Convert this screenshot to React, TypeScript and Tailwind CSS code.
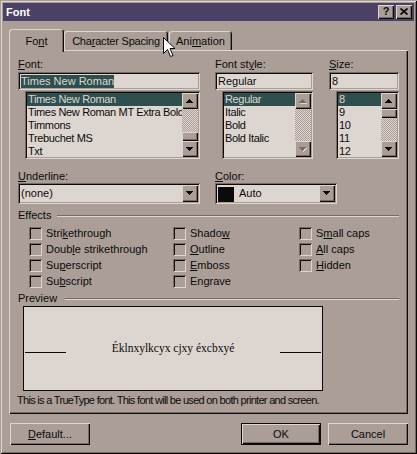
import type { ReactNode } from 'react';

// classic 3D borders, painted with inset shadows
const raised = 'bg-[#aa9e97] shadow-[inset_1px_1px_#ddd6d0,inset_-1px_-1px_#0b0b0b,inset_-2px_-2px_#796a63]';
const sunken = 'shadow-[inset_1px_1px_#796a63,inset_-1px_-1px_#ddd6d0,inset_2px_2px_#0b0b0b,inset_-2px_-2px_#aa9e97]';
const track = 'bg-[image:repeating-conic-gradient(#ddd6d0_0%_25%,#aa9e97_0%_50%)] bg-size-[2px_2px]';

function Arrow({ dir, disabled }: { dir: 'up' | 'down'; disabled?: boolean }) {
  const rows = [0, 1, 2, 3];
  const rect = (i: number, dx: number, color: string) => {
    const w = dir === 'up' ? 1 + 2 * i : 7 - 2 * i;
    return <rect key={`${i}-${dx}`} x={(7 - w) / 2 + dx} y={i + dx} width={w} height={1} fill={color} />;
  };
  return (
    <svg width="8" height="5" viewBox="0 0 8 5" shapeRendering="crispEdges">
      {disabled && rows.map((i) => rect(i, 1, '#ddd6d0'))}
      {rows.map((i) => rect(i, 0, disabled ? '#796a63' : '#0b0b0b'))}
    </svg>
  );
}

function ScrollBar({ thumb, disabled }: { thumb?: 'top' | 'bottom'; disabled?: boolean }) {
  return (
    <div className="flex w-[16px] shrink-0 flex-col">
      <div className={`${raised} flex h-[16px] items-center justify-center`}>
        <Arrow dir="up" disabled={disabled} />
      </div>
      <div className={`${track} flex flex-1 flex-col ${thumb === 'bottom' ? 'justify-end' : 'justify-start'}`}>
        {thumb && <div className={`${raised} h-[9px]`} />}
      </div>
      <div className={`${raised} flex h-[16px] items-center justify-center`}>
        <Arrow dir="down" disabled={disabled} />
      </div>
    </div>
  );
}

function ListBox({ items, width, thumb, disabled }: { items: string[]; width: string; thumb?: 'top' | 'bottom'; disabled?: boolean }) {
  return (
    <div className={`${sunken} ${width} mt-[1px] ml-[7px] flex h-[68px] bg-[#ddd6d0] p-[2px]`}>
      <div className="min-w-0 flex-1 overflow-hidden">
        {items.map((item, i) => (
          <div
            key={item}
            className={`h-[13px] whitespace-nowrap pl-[1px] leading-[13px] tracking-[-0.35px] ${i === 0 ? 'bg-[#2f4f4f] text-[#ddd6d0]' : ''}`}
          >
            {item}
          </div>
        ))}
      </div>
      <ScrollBar thumb={thumb} disabled={disabled} />
    </div>
  );
}

function TextBox({ value, selected }: { value: string; selected?: boolean }) {
  return (
    <div className={`${sunken} flex h-[18px] items-center bg-[#ddd6d0] pl-[3px]`}>
      <span className={`leading-[13px] ${selected ? 'bg-[#2f4f4f] text-[#ddd6d0]' : ''}`}>{value}</span>
    </div>
  );
}

function DropDown({ children }: { children: ReactNode }) {
  return (
    <div className={`${sunken} flex h-[21px] items-stretch bg-[#ddd6d0] p-[2px]`}>
      <div className="flex flex-1 items-center">{children}</div>
      <div className={`${raised} flex w-[16px] items-center justify-center`}>
        <Arrow dir="down" />
      </div>
    </div>
  );
}

function Check({ children }: { children: ReactNode }) {
  return (
    <div className="flex h-[16px] items-center gap-[4px]">
      <div className={`${sunken} h-[13px] w-[13px]`} />
      <span>{children}</span>
    </div>
  );
}

function GroupTitle({ children, gap }: { children: ReactNode; gap: string }) {
  return (
    <div className="flex h-[13px] items-center">
      <span>{children}</span>
      <div className={`${gap} h-[2px] flex-1 border-t border-b border-t-[#796a63] border-b-[#ddd6d0]`} />
    </div>
  );
}

export default function App() {
  return (
    <div className="relative h-[454px] w-[417px] overflow-hidden bg-[#aa9e97] p-[3px] font-['Liberation_Sans',Arial,sans-serif] text-[11px] leading-[13px] text-[#0b0b0b] shadow-[inset_1px_1px_#aa9e97,inset_-1px_-1px_#0b0b0b,inset_2px_2px_#ddd6d0,inset_-2px_-2px_#796a63]">
      {/* Title bar */}
      <div className="flex h-[18px] items-center bg-[#4b4166] pr-[2px] pl-[3px]">
        <span className="font-bold text-white">Font</span>
        <div className="ml-auto flex gap-[2px]">
          <div className={`${raised} flex h-[14px] w-[16px] items-center justify-center pb-[1px] text-[11px] font-bold`}>?</div>
          <div className={`${raised} flex h-[14px] w-[16px] items-center justify-center pb-[1px]`}>
            <svg width="8" height="7" viewBox="0 0 8 7">
              <path d="M0.5 0.5L7.5 6.5M7.5 0.5L0.5 6.5" stroke="#0b0b0b" strokeWidth="1.7" />
            </svg>
          </div>
        </div>
      </div>

      <div className="px-[6px]">
        {/* Tabs */}
        <div className="mt-[8px] flex h-[21px] items-end">
          <div className="relative z-10 -mb-[2px] h-[23px] w-[55px] rounded-t-[3px] bg-[#aa9e97] pt-[6px] text-center shadow-[inset_1px_1px_#ddd6d0,inset_-1px_0_#0b0b0b,inset_-2px_0_#796a63]">
            Fo<u>n</u>t
          </div>
          <div className="h-[19px] w-[104px] rounded-t-[3px] pt-[4px] text-center tracking-[-0.2px] shadow-[inset_1px_1px_#ddd6d0,inset_-1px_0_#0b0b0b,inset_-2px_0_#796a63]">
            Cha<u>r</u>acter Spacing
          </div>
          <div className="ml-[1px] h-[19px] w-[63px] rounded-t-[3px] pt-[4px] text-center shadow-[inset_1px_1px_#ddd6d0,inset_-1px_0_#0b0b0b,inset_-2px_0_#796a63]">
            Ani<u>m</u>ation
          </div>
        </div>

        {/* Tab page */}
        <div className="h-[364px] px-[9px] pt-[8px] shadow-[inset_1px_1px_#ddd6d0,inset_-1px_-1px_#0b0b0b,inset_-2px_-2px_#796a63]">
          <div className="flex">
            <div className="w-[182px]">
              <div className="h-[14px]"><u>F</u>ont:</div>
              <TextBox value="Times New Roman" selected />
              <ListBox
                width="w-[175px]"
                thumb="bottom"
                items={['Times New Roman', 'Times New Roman MT Extra Bold', 'Timmons', 'Trebuchet MS', 'Txt']}
              />
            </div>
            <div className="ml-[15px] w-[98px]">
              <div className="h-[14px]">Font st<u>y</u>le:</div>
              <TextBox value="Regular" />
              <ListBox width="w-[91px]" disabled items={['Regular', 'Italic', 'Bold', 'Bold Italic']} />
            </div>
            <div className="ml-[16px] w-[70px]">
              <div className="h-[14px]"><u>S</u>ize:</div>
              <TextBox value="8" />
              <ListBox width="w-[63px]" thumb="top" items={['8', '9', '10', '11', '12']} />
            </div>
          </div>

          <div className="mt-[11px] flex">
            <div className="w-[182px]">
              <div className="h-[13px]"><u>U</u>nderline:</div>
              <DropDown>
                <span className="pl-[1px]">(none)</span>
              </DropDown>
            </div>
            <div className="ml-[15px] w-[122px]">
              <div className="h-[13px]"><u>C</u>olor:</div>
              <DropDown>
                <div className="mt-[1px] ml-[1px] h-[15px] w-[16px] bg-[#0b0b0b]" />
                <span className="ml-[5px]">Auto</span>
              </DropDown>
            </div>
          </div>

          <div className="mt-[5px]">
            <GroupTitle gap="ml-[6px]">Effects</GroupTitle>
          </div>
          <div className="mt-[3px] flex pl-[11px]">
            <div className="w-[144px]">
              <Check>Stri<u>k</u>ethrough</Check>
              <Check>Doub<u>l</u>e strikethrough</Check>
              <Check>Su<u>p</u>erscript</Check>
              <Check>Su<u>b</u>script</Check>
            </div>
            <div className="w-[126px]">
              <Check>Shado<u>w</u></Check>
              <Check><u>O</u>utline</Check>
              <Check><u>E</u>mboss</Check>
              <Check>En<u>g</u>rave</Check>
            </div>
            <div>
              <Check>S<u>m</u>all caps</Check>
              <Check><u>A</u>ll caps</Check>
              <Check><u>H</u>idden</Check>
            </div>
          </div>

          <div className="mt-[3px]">
            <GroupTitle gap="ml-[8px]">Preview</GroupTitle>
          </div>
          <div className="mt-[1px] ml-[5px] flex h-[85px] w-[300px] items-center justify-between border border-[#0b0b0b] bg-[#ddd6d0] px-[1px]">
            <div className="mt-[7px] h-px w-[41px] bg-[#0b0b0b]" />
            <span className="font-['Liberation_Serif','Times_New_Roman',serif] text-[11.5px]">
              Éklnxylkcyx cjxy éxcbxyé
            </span>
            <div className="mt-[7px] h-px w-[41px] bg-[#0b0b0b]" />
          </div>
          <div className="mt-[3px] -ml-[1px] whitespace-nowrap tracking-[-0.7px]">
            This is a TrueType font. This font will be used on both printer and screen.
          </div>
        </div>

        {/* Buttons */}
        <div className="mt-[9px] flex h-[22px]">
          <div className={`${raised} ml-[1px] flex w-[80px] items-center justify-center`}>
            <span><u>D</u>efault...</span>
          </div>
          <div className="ml-auto flex w-[80px] items-center justify-center bg-[#aa9e97] shadow-[inset_0_0_0_1px_#0b0b0b,inset_2px_2px_#ddd6d0,inset_-2px_-2px_#0b0b0b,inset_-3px_-3px_#796a63]">
            OK
          </div>
          <div className={`${raised} ml-[7px] flex w-[80px] items-center justify-center`}>Cancel</div>
        </div>
      </div>

      {/* mouse pointer over the tab strip */}
      <svg className="absolute top-[37px] left-[163px] z-20" width="13" height="21" viewBox="0 0 13 21">
        <path d="M0.5 0.5L0.5 16.5L4.5 12.5L7.5 19.5L10 18.5L7 11.5L12 11.5Z" fill="#fff" stroke="#0b0b0b" strokeWidth="1" />
      </svg>
    </div>
  );
}
